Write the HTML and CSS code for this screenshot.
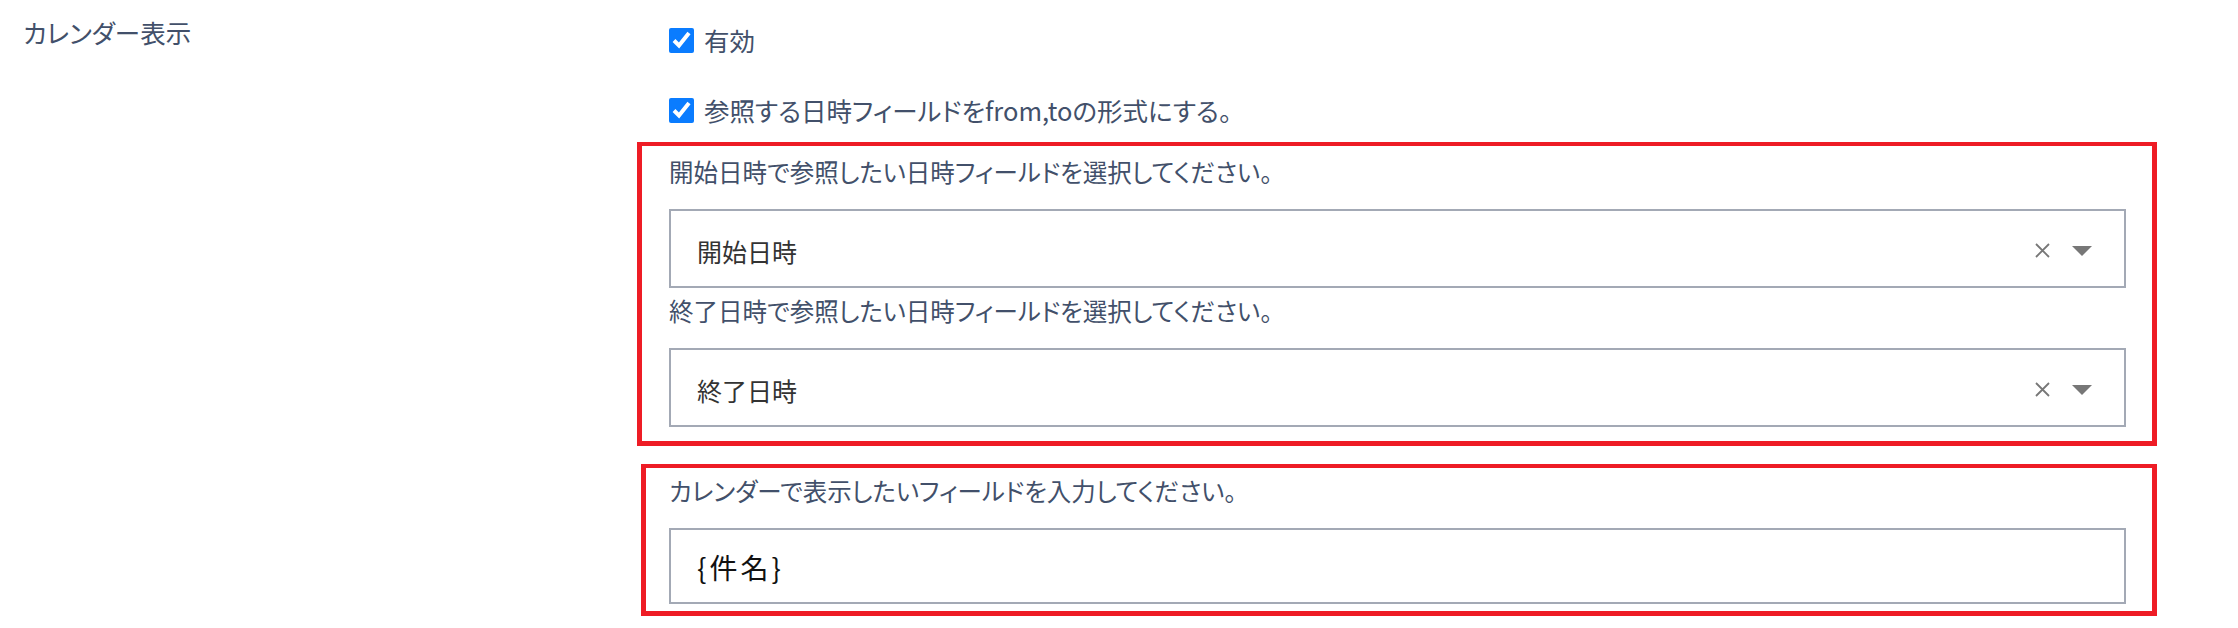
FILE: index.html
```html
<!DOCTYPE html>
<html lang="ja">
<head>
<meta charset="utf-8">
<title>カレンダー表示</title>
<link rel="stylesheet" href="styles.css">
</head>
<body>
<div class="row">
  <div class="row-label">カレンダー表示</div>
  <div class="row-body">
    <div class="checks">
      <label class="check"><input type="checkbox" checked><span>有効</span></label>
      <label class="check"><input type="checkbox" checked><span>参照する日時フィールドをfrom,toの形式にする。</span></label>
    </div>
    <div class="frame frame-a">
      <div class="field-label first">開始日時で参照したい日時フィールドを選択してください。</div>
      <div class="select">
        <span class="select-value">開始日時</span>
        <span class="select-clear"><svg width="15" height="15" viewBox="0 0 15 15"><path d="M1 1L14 14M14 1L1 14" stroke="#777" stroke-width="1.8" fill="none"/></svg></span>
        <span class="select-arrow"><svg width="20" height="10" viewBox="0 0 20 10"><path d="M0 0H20L10 10Z" fill="#777"/></svg></span>
      </div>
      <div class="field-label">終了日時で参照したい日時フィールドを選択してください。</div>
      <div class="select">
        <span class="select-value">終了日時</span>
        <span class="select-clear"><svg width="15" height="15" viewBox="0 0 15 15"><path d="M1 1L14 14M14 1L1 14" stroke="#777" stroke-width="1.8" fill="none"/></svg></span>
        <span class="select-arrow"><svg width="20" height="10" viewBox="0 0 20 10"><path d="M0 0H20L10 10Z" fill="#777"/></svg></span>
      </div>
    </div>
    <div class="frame frame-b">
      <div class="field-label first">カレンダーで表示したいフィールドを入力してください。</div>
      <div class="text-input">{件名}</div>
    </div>
  </div>
</div>
</body>
</html>
```

FILE: styles.css
```css
html, body {
  margin: 0;
  padding: 0;
  background: #ffffff;
}

body {
  font-family: "Noto Sans CJK JP", "Noto Sans", sans-serif;
  font-feature-settings: "palt";
  color: #42506a;
}

.row {
  display: flex;
  align-items: flex-start;
}

.row-label {
  box-sizing: border-box;
  width: 637px;
  padding-left: 23px;
  padding-top: 15px;
  font-size: 25.5px;
  line-height: 34px;
  color: #42506a;
}

.row-body {
  width: 1520px;
}

.checks {
  display: flex;
  flex-direction: column;
  gap: 36px;
  padding-top: 23px;
}

.check {
  display: flex;
  align-items: center;
  gap: 10px;
  height: 34px;
  margin-left: 32px;
  font-size: 25.5px;
  line-height: 34px;
  color: #42506a;
}

.check input {
  width: 25px;
  height: 25px;
  margin: 0;
  accent-color: #0a7cff;
}

.frame {
  box-sizing: border-box;
  border: 5px solid #ee1c25;
  border-top-width: 4px;
  border-bottom-width: 5px;
}

.frame-a {
  margin-top: 15px;
  width: 1520px;
  padding: 9px 26px 14px 27px;
}

.frame-b {
  margin-top: 18px;
  margin-left: 4px;
  width: 1516px;
  padding: 6px 26px 7px 23px;
}

.field-label {
  font-size: 24.5px;
  line-height: 34px;
  color: #42506a;
  margin-top: 6px;
  white-space: nowrap;
}

.field-label.first {
  margin-top: 0;
}

.select {
  box-sizing: border-box;
  display: flex;
  align-items: center;
  height: 79px;
  margin-top: 20px;
  border: 2px solid #a3a9b5;
  padding: 4px 32px 0 26px;
}

.select-value {
  flex: 1;
  font-size: 25px;
  color: #333333;
  font-feature-settings: normal;
}

.select-clear {
  display: flex;
  margin-right: 22px;
}

.select-arrow {
  display: flex;
}

.text-input {
  box-sizing: border-box;
  display: flex;
  align-items: center;
  height: 76px;
  margin-top: 20px;
  border: 2px solid #a3a9b5;
  padding: 2px 26px 0 26px;
  font-size: 28px;
  letter-spacing: 3px;
  color: #111111;
  font-feature-settings: normal;
}
```
